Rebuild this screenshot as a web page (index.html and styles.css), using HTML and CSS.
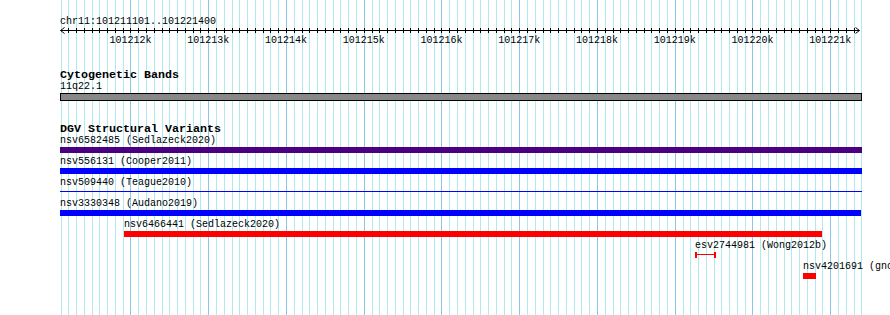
FILE: index.html
```html
<!DOCTYPE html>
<html>
<head>
<meta charset="utf-8">
<title>chr11:101211101..101221400</title>
<link rel="stylesheet" href="styles.css">
</head>
<body>
<div class="view">
  <svg class="grid" id="grid" width="890" height="315" shape-rendering="crispEdges"></svg>
  <div class="tracks">
    <div class="locus">chr11:101211101..101221400</div>
    <svg class="ruler" id="ruler" width="802" height="20">
      <path class="axis" d="M0.5 3.5H799.5M4.5 0.5L0.5 3.5L4.5 6.5M795.5 0.5L799.5 3.5L795.5 6.5"/>
      <path class="ticks" id="ticks" d=""/>
      <text x="70.5" y="16">101212k</text>
      <text x="148.3" y="16">101213k</text>
      <text x="226" y="16">101214k</text>
      <text x="303.8" y="16">101215k</text>
      <text x="381.5" y="16">101216k</text>
      <text x="459.3" y="16">101217k</text>
      <text x="537" y="16">101218k</text>
      <text x="614.8" y="16">101219k</text>
      <text x="692.5" y="16">101220k</text>
      <text x="770.3" y="16">101221k</text>
    </svg>

    <section class="track">
      <h2 class="track-title">Cytogenetic Bands</h2>
      <div class="band-label">11q22.1</div>
      <div class="band"></div>
    </section>

    <section class="track">
      <h2 class="track-title">DGV Structural Variants</h2>
      <div class="feature">
        <div class="feature-label">nsv6582485 (Sedlazeck2020)</div>
        <div class="bar bar-purple" style="width:802px"></div>
      </div>
      <div class="feature">
        <div class="feature-label">nsv556131 (Cooper2011)</div>
        <div class="bar bar-blue" style="width:802px"></div>
      </div>
      <div class="feature">
        <div class="feature-label">nsv509440 (Teague2010)</div>
        <div class="bar bar-line" style="width:802px"></div>
      </div>
      <div class="feature">
        <div class="feature-label">nsv3330348 (Audano2019)</div>
        <div class="bar bar-blue" style="width:801px"></div>
      </div>
      <div class="feature" style="margin-left:64px">
        <div class="feature-label">nsv6466441 (Sedlazeck2020)</div>
        <div class="bar bar-red" style="width:698px"></div>
      </div>
      <div class="feature" style="margin-left:635px">
        <div class="feature-label">esv2744981 (Wong2012b)</div>
        <div class="bar bar-range" style="width:21px"></div>
      </div>
      <div class="feature" style="margin-left:743px">
        <div class="feature-label">nsv4201691 (gnomAD_v2.1_sv)</div>
        <div class="bar bar-red" style="width:13px"></div>
      </div>
    </section>
  </div>
</div>
<script src="script.js"></script>
</body>
</html>
```

FILE: styles.css
```css
html, body {
  margin: 0;
  padding: 0;
  background: #ffffff;
}

.view {
  position: relative;
  width: 890px;
  height: 315px;
  overflow: hidden;
  background: #ffffff;
  font-family: "Liberation Mono", "DejaVu Sans Mono", monospace;
  font-size: 10px;
  line-height: 10px;
  color: #000000;
}

.grid {
  position: absolute;
  left: 0;
  top: 0;
}

.grid .minor { fill: #aeeaf0; }
.grid .major { fill: #8ac6ea; }

.tracks {
  position: relative;
  padding-top: 17px;
  padding-left: 60px;
}

.locus {
  height: 10px;
  white-space: nowrap;
}

.ruler {
  display: block;
  overflow: visible;
}

.ruler .axis,
.ruler .ticks {
  fill: none;
  stroke: #000000;
  stroke-width: 1px;
}

.ruler text {
  font-family: "Liberation Mono", "DejaVu Sans Mono", monospace;
  font-size: 10px;
  text-anchor: middle;
  fill: #000000;
}

.track {
  display: block;
}

.track-title {
  margin: 22px 0 0 0;
  height: 12px;
  font-size: 11.67px;
  line-height: 12px;
  font-weight: bold;
  white-space: nowrap;
}

.band-label {
  margin-top: 1px;
  height: 10px;
  white-space: nowrap;
}

.band {
  margin-top: 1px;
  width: 800px;
  height: 6px;
  border: 1px solid #000000;
  background: #888888;
}

.feature {
  height: 21px;
}

.feature:first-of-type {
  margin-top: 1px;
}

.feature-label {
  height: 10px;
  white-space: nowrap;
}

.bar {
  margin-top: 1px;
  height: 6px;
}

.bar-purple { background: #4b0082; }
.bar-blue { background: #0000ff; }
.bar-red { background: #ff0000; }

.bar-line {
  margin-top: 3px;
  height: 1px;
  background: #0000ff;
}

.bar-range {
  box-sizing: border-box;
  border-left: 2px solid #ff0000;
  border-right: 2px solid #ff0000;
  background: linear-gradient(#ff0000, #ff0000) 0 2px / 100% 1px no-repeat;
}
```

FILE: script.js
```js
(function () {
  var NS = "http://www.w3.org/2000/svg";
  var grid = document.getElementById("grid");
  var step = 7.775;
  for (var k = 0; k <= 103; k++) {
    var x = Math.round(60.5 + k * step);
    var r = document.createElementNS(NS, "rect");
    r.setAttribute("x", x);
    r.setAttribute("y", 0);
    r.setAttribute("width", 1);
    r.setAttribute("height", 315);
    r.setAttribute("class", k % 10 === 9 ? "major" : "minor");
    grid.appendChild(r);
  }
  var d = "";
  for (var j = 1; j <= 102; j++) {
    var tx = Math.round(60.5 + j * step) - 60 + 0.5;
    d += "M" + tx + " 1V6";
  }
  document.getElementById("ticks").setAttribute("d", d);
})();
```
